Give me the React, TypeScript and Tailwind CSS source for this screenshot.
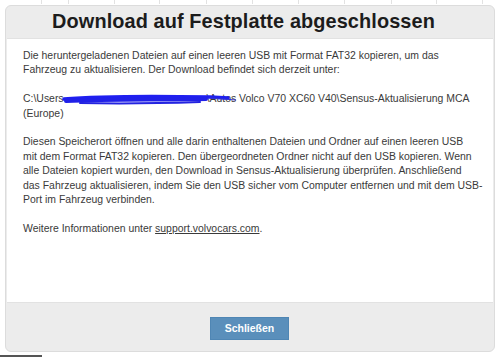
import React from "react";

const ticksTop = [42, 27, 46, 45, 47, 46, 46, 46, 47, 45, 46];

function Lines({ lines }: { lines: React.ReactNode[] }) {
  return (
    <p className="mt-[14.4px] first:mt-0">
      {lines.map((l, i) => (
        <span key={i} className="block whitespace-nowrap">
          {l}
        </span>
      ))}
    </p>
  );
}

export default function App() {
  return (
    <div className="relative h-[357px] w-[500px] overflow-hidden bg-white" style={{ fontFamily: '"Liberation Sans", Arial, sans-serif' }}>
      {/* faint table ticks at top */}
      <div className="absolute left-0 top-0 flex h-[4px]">
        {ticksTop.map((w, i) => (
          <div key={i} className="h-full border-r border-[#e2e2e2]" style={{ width: w }} />
        ))}
      </div>
      <div className="px-[5px] pt-[5px]">
        <div className="flex h-[347px] flex-col overflow-hidden rounded-[6px] border border-[#dcdcdc] bg-[#ececec]">
          {/* header */}
          <div className="flex h-[32px] items-center justify-center pr-[13px]">
            <h1 className="text-[19.9px] font-bold leading-none tracking-[0.1px] text-[#1c1c1c]">
              Download auf Festplatte abgeschlossen
            </h1>
          </div>
          {/* body */}
          <div className="mx-[1px] flex-1 border-y border-[#e2e2e2] bg-white pl-[16px] pr-[16px] pt-[10px] text-[10.45px] leading-[14.4px] text-[#3a3a3a]">
            <Lines
              lines={[
                "Die heruntergeladenen Dateien auf einen leeren USB mit Format FAT32 kopieren, um das",
                "Fahrzeug zu aktualisieren. Der Download befindet sich derzeit unter:",
              ]}
            />
            <div className="relative mt-[14.4px]">
              <span className="block whitespace-nowrap">
                C:\Users<span className="inline-block w-[143px]" />\Autos Volco V70 XC60 V40\Sensus-Aktualisierung MCA
              </span>
              <span className="block">(Europe)</span>
              <svg className="absolute left-[37px] top-[1px]" width="176" height="14" viewBox="0 0 176 14">
                <path d="M4 6 C40 3, 90 3, 150 4 L168 5" stroke="#1f1ff0" strokeWidth="3.5" fill="none" strokeLinecap="round" />
                <path d="M6 8 C50 6, 100 7, 146 6" stroke="#2020e8" strokeWidth="4" fill="none" strokeLinecap="round" />
                <path d="M20 10 C60 11, 110 10, 140 9" stroke="#2323e0" strokeWidth="2" fill="none" strokeLinecap="round" />
                <path d="M150 5 L176 7" stroke="#3535d0" strokeWidth="1" fill="none" />
              </svg>
            </div>
            <Lines
              lines={[
                "Diesen Speicherort öffnen und alle darin enthaltenen Dateien und Ordner auf einen leeren USB",
                "mit dem Format FAT32 kopieren. Den übergeordneten Ordner nicht auf den USB kopieren. Wenn",
                "alle Dateien kopiert wurden, den Download in Sensus-Aktualisierung überprüfen. Anschließend",
                "das Fahrzeug aktualisieren, indem Sie den USB sicher vom Computer entfernen und mit dem USB-",
                "Port im Fahrzeug verbinden.",
              ]}
            />
            <Lines
              lines={[
                <>
                  Weitere Informationen unter <span className="underline">support.volvocars.com</span>.
                </>,
              ]}
            />
          </div>
          {/* footer */}
          <div className="flex h-[48px] items-center justify-center pr-[1px] pt-[3px]">
            <button className="h-[23px] w-[79px] border border-[#4f86b4] bg-[#5a8fbb] text-[10.5px] font-bold text-white">
              Schließen
            </button>
          </div>
        </div>
      </div>
      <div className="absolute bottom-0 left-0 h-[2px] w-[42px] bg-[#555]" />
    </div>
  );
}
